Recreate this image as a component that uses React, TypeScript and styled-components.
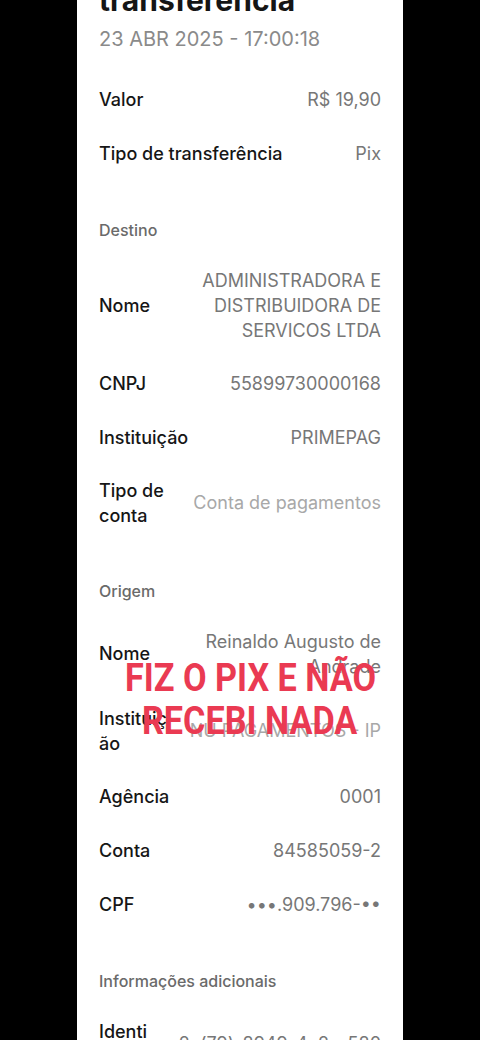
import React from 'react';
import styled, { createGlobalStyle } from 'styled-components';

const GlobalStyle = createGlobalStyle`
  html, body {
    margin: 0;
    padding: 0;
    background: #000;
    overflow: hidden;
  }
  body {
    font-family: Inter, Roboto, "Noto Sans", sans-serif;
  }
`;

const Screen = styled.div`
  display: flex;
  justify-content: center;
  height: 1040px;
  overflow: hidden;
  background: #000;
`;

const Panel = styled.div`
  position: relative;
  width: 326px;
  background: #fff;
  display: flex;
  flex-direction: column;
`;

const Header = styled.div`
  display: flex;
  flex-direction: column;
  padding: 0 22px 19px;
  margin-top: -51px;
`;

const Title = styled.h1`
  margin: 0;
  font-size: 30px;
  line-height: 34px;
  font-weight: 700;
  color: #151515;
  white-space: pre-line;
`;

const Stamp = styled.div`
  margin-top: 8px;
  font-size: 20px;
  line-height: 28px;
  color: #8a8a8a;
`;

const Section = styled.div`
  display: flex;
  flex-direction: column;
`;

const SectionTitle = styled.div`
  padding: 40px 22px 14px;
  font-size: 16px;
  line-height: 20px;
  font-weight: 500;
  color: #6a6a6a;
`;

const Row = styled.div`
  display: flex;
  justify-content: space-between;
  align-items: center;
  gap: 12px;
  min-height: 54px;
  box-sizing: border-box;
  padding: 13.5px 22px;
`;

const Label = styled.div`
  flex-shrink: 0;
  font-size: 18px;
  line-height: 25px;
  font-weight: 500;
  color: #161616;
  white-space: pre;
`;

const Value = styled.div<{ $faded?: boolean }>`
  min-width: 0;
  font-size: 18px;
  line-height: 25px;
  color: ${p => (p.$faded ? '#a8a8a8' : '#777')};
  text-align: right;
  white-space: pre;
  overflow: hidden;
`;

const Divider = styled.div`
  height: 4px;
  margin: 0 3px;
  background: #f4f4f4;
`;

const Caption = styled.div`
  position: absolute;
  left: 0;
  right: 0;
  top: 657px;
  display: flex;
  flex-direction: column;
  align-items: center;
  padding-left: 20px;
  pointer-events: none;
`;

const CaptionLine = styled.div`
  font-family: Roboto, "DejaVu Sans", sans-serif;
  font-weight: 700;
  font-size: 38px;
  line-height: 43px;
  color: #ea3a52;
  white-space: nowrap;
  transform: scaleX(0.9);
`;

type Item = { label: string; value: string; faded?: boolean };

const transfer: Item[] = [
  { label: 'Valor', value: 'R$ 19,90' },
  { label: 'Tipo de transferência', value: 'Pix' },
];

const destino: Item[] = [
  { label: 'Nome', value: 'ADMINISTRADORA E\nDISTRIBUIDORA DE\nSERVICOS LTDA' },
  { label: 'CNPJ', value: '55899730000168' },
  { label: 'Instituição', value: 'PRIMEPAG' },
  { label: 'Tipo de\nconta', value: 'Conta de pagamentos', faded: true },
];

const origem: Item[] = [
  { label: 'Nome', value: 'Reinaldo Augusto de\nAndrade' },
  { label: 'Instituiç\não', value: 'NU PAGAMENTOS - IP', faded: true },
  { label: 'Agência', value: '0001' },
  { label: 'Conta', value: '84585059-2' },
  { label: 'CPF', value: '•••.909.796-••' },
];

const extra: Item[] = [
  { label: 'Identi\nficador', value: '2c(79)-8949-4e2c-580' },
];

const Rows: React.FC<{ items: Item[] }> = ({ items }) => (
  <>
    {items.map(item => (
      <Row key={item.label}>
        <Label>{item.label}</Label>
        <Value $faded={item.faded}>{item.value}</Value>
      </Row>
    ))}
  </>
);

const App: React.FC = () => {
  return (
    <Screen>
      <GlobalStyle />
      <Panel>
        <Header>
          <Title>{'Comprovante de\ntransferência'}</Title>
          <Stamp>23 ABR 2025 - 17:00:18</Stamp>
        </Header>
        <Section>
          <Rows items={transfer} />
        </Section>
        <Divider />
        <Section>
          <SectionTitle>Destino</SectionTitle>
          <Rows items={destino} />
        </Section>
        <Divider />
        <Section>
          <SectionTitle>Origem</SectionTitle>
          <Rows items={origem} />
        </Section>
        <Divider />
        <Section>
          <SectionTitle>Informações adicionais</SectionTitle>
          <Rows items={extra} />
        </Section>
        <Caption>
          <CaptionLine>FIZ O PIX E NÃO</CaptionLine>
          <CaptionLine>RECEBI NADA</CaptionLine>
        </Caption>
      </Panel>
    </Screen>
  );
};

export default App;
